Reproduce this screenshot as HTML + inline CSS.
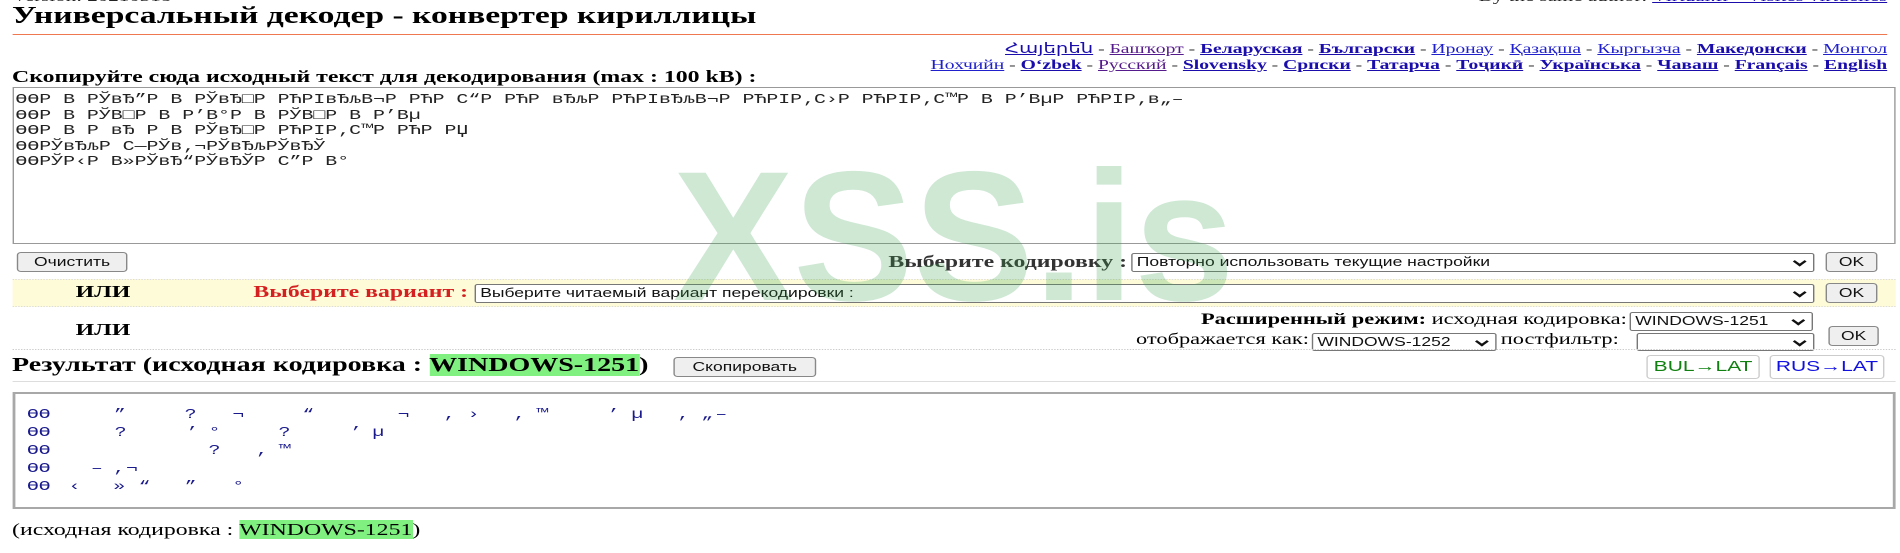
<!DOCTYPE html>
<html><head><meta charset="utf-8">
<style>
html,body{margin:0;padding:0;background:#fff;width:1900px;height:553px;overflow:hidden;}
#c{position:absolute;left:0;top:0;width:1357px;height:553px;transform:scaleX(1.4);transform-origin:0 0;font-family:"Liberation Serif",serif;color:#000;}
.a{position:absolute;white-space:nowrap;}
a{color:#1a0dab;}
a.v{color:#551a8b;font-weight:normal;}
a.b{font-weight:bold;}
a.n{font-weight:normal;color:#2020cc;}
.sel{position:absolute;box-sizing:border-box;border:1px solid #777;border-radius:2px;background:#fff;font:12.5px "Liberation Sans",sans-serif;line-height:17px;padding-left:3px;color:#111;overflow:hidden;white-space:nowrap;}
.sel:after{content:"";position:absolute;right:6px;top:4px;width:5px;height:5px;border-right:2px solid #111;border-bottom:2px solid #111;transform:rotate(45deg);}
.btn{position:absolute;box-sizing:border-box;border:1px solid #888;border-radius:3px;background:#efefef;font:12.5px "Liberation Sans",sans-serif;text-align:center;color:#111;}
.m{font-family:"Liberation Mono",monospace;}
.o{position:absolute;font:14px "Liberation Mono",monospace;color:#1a1a8c;}
.hl{background:#80f080;}
</style></head><body>
<div id="c">
<div class="a" style="left:8.6px;top:-11px;font-size:15px;color:#222">Version: 20210318</div>
<div class="a" style="right:9px;top:-11px;font-size:15px;color:#222">By the same author: <a href="#" style="color:#1a0dab">Virtual.fr - Visites virtuelles</a></div>
<div class="a" style="left:8.6px;top:3px;font-size:24px;font-weight:bold;line-height:27px">Универсальный декодер - конвертер кириллицы</div>
<div class="a" style="left:8.6px;top:34px;width:1339px;border-top:1.5px solid #f07850"></div>
<div class="a" style="right:9px;top:41px;font-size:14px;line-height:16px;text-align:right;color:#333">
<a class="b" href="#" style="font-family:'DejaVu Sans',sans-serif;font-weight:normal;color:#1a0dab">Հայերեն</a> - <a class="v" href="#">Башҡорт</a> - <a class="b" href="#">Беларуская</a> - <a class="b" href="#">Български</a> - <a class="n" href="#">Иронау</a> - <a class="n" href="#">Қазақша</a> - <a class="n" href="#">Кыргызча</a> - <a class="b" href="#">Македонски</a> - <a class="n" href="#">Монгол</a><br>
<a class="n" href="#">Нохчийн</a> - <a class="b" href="#">O‘zbek</a> - <a class="v" href="#">Русский</a> - <a class="b" href="#">Slovensky</a> - <a class="b" href="#">Српски</a> - <a class="b" href="#">Татарча</a> - <a class="b" href="#">Тоҷикӣ</a> - <a class="b" href="#">Українська</a> - <a class="b" href="#">Чаваш</a> - <a class="b" href="#">Français</a> - <a class="b" href="#">English</a></div>
<div class="a" style="left:8.6px;top:67px;font-size:17px;font-weight:bold">Скопируйте сюда исходный текст для декодирования (max : 100 kB) :</div>
<div class="a" style="left:8.6px;top:87px;width:1345px;height:157px;box-sizing:border-box;border:1px solid #999;"></div>
<pre class="m" style="position:absolute;left:11px;top:93px;margin:0;font-size:14.2px;line-height:15.5px;color:#222;white-space:pre">ӨӨР В РЎвЂ”Р В РЎвЂ□Р РЋРІвЂљВ¬Р РЋР С“Р РЋР вЂљР РЋРІвЂљВ¬Р РЋРІР‚С›Р РЋРІР‚С™Р В Р’ВµР РЋРІР‚в„–
ӨӨР В РЎВ□Р В Р’В°Р В РЎВ□Р В Р’Вµ
ӨӨР В Р вЂ Р В РЎвЂ□Р РЋРІР‚С™Р РЋР РЏ
ӨӨРЎвЂљР С—РЎв‚¬РЎвЂљРЎвЂЎ
ӨӨРЎР‹Р В»РЎвЂ“РЎвЂЎР С”Р В°</pre>
<div class="btn" style="left:12px;top:252px;width:79px;height:20px;line-height:18px">Очистить</div>
<div class="a" style="right:552px;top:252px;font-size:17px;font-weight:bold;color:#333">Выберите кодировку :</div>
<div class="sel" style="left:808px;top:253px;width:488px;height:19px">Повторно использовать текущие настройки</div>
<div class="btn" style="left:1304px;top:252px;width:37px;height:20px;line-height:18px">OK</div>
<div class="a" style="left:8.6px;top:279px;width:1345px;height:28px;background:#fdfbd8;border-top:1px dotted #ddd;border-bottom:1px dotted #ddd;box-sizing:border-box"></div>
<div class="a" style="left:54px;top:282px;font-size:17px;font-weight:bold">ИЛИ</div>
<div class="a" style="left:181px;top:282px;font-size:17px;font-weight:bold;color:#d42020">Выберите вариант :</div>
<div class="sel" style="left:339px;top:284px;width:957px;height:19px">Выберите читаемый вариант перекодировки :</div>
<div class="btn" style="left:1304px;top:283px;width:37px;height:20px;line-height:18px">OK</div>
<div class="a" style="left:54px;top:320px;font-size:17px;font-weight:bold">ИЛИ</div>
<div class="a" style="right:195px;top:311px;font-size:16px"><b>Расширенный режим:</b> исходная кодировка:</div>
<div class="sel" style="left:1164px;top:312px;width:131px;height:19px">WINDOWS-1251</div>
<div class="a" style="right:422px;top:331px;font-size:16px">отображается как:</div>
<div class="sel" style="left:937px;top:333px;width:132px;height:18px">WINDOWS-1252</div>
<div class="a" style="left:1072px;top:331px;font-size:16px">постфильтр:</div>
<div class="sel" style="left:1169px;top:333px;width:127px;height:18px"></div>
<div class="btn" style="left:1306px;top:326px;width:36px;height:20px;line-height:18px">OK</div>
<div class="a" style="left:8.6px;top:349px;width:1345px;border-top:1px dotted #ccc"></div>
<div class="a" style="left:8.6px;top:354px;font-size:20px;font-weight:bold">Результат (исходная кодировка : <span class="hl">WINDOWS-1251</span>)</div>
<div class="btn" style="left:481px;top:357px;width:102px;height:20px;line-height:18px">Скопировать</div>
<div class="btn" style="left:1176px;top:355px;width:81px;height:24px;line-height:22px;background:#fff;border-color:#ccc;color:#108010;font-family:'Liberation Sans Narrow','Liberation Sans',sans-serif;font-size:15px">BUL→LAT</div>
<div class="btn" style="left:1264px;top:355px;width:82px;height:24px;line-height:22px;background:#fff;border-color:#ccc;color:#1010e0;font-family:'Liberation Sans Narrow','Liberation Sans',sans-serif;font-size:15px">RUS→LAT</div>
<div class="a" style="left:8.6px;top:381px;width:1345px;border-top:1px solid #ddd"></div>
<div class="a" style="left:8.6px;top:392px;width:1345px;height:117px;box-sizing:border-box;border:2.5px solid #a8a8a8;border-left-width:2px"></div>
<div class="o" style="left:19.3px;top:407px">ӨӨ</div><div class="o" style="left:81.4px;top:407px">”</div><div class="o" style="left:132px;top:407px">?</div><div class="o" style="left:166px;top:407px">¬</div><div class="o" style="left:216px;top:407px">“</div><div class="o" style="left:284px;top:407px">¬</div><div class="o" style="left:317px;top:407px">,</div><div class="o" style="left:334px;top:407px">›</div><div class="o" style="left:367px;top:407px">,</div><div class="o" style="left:383px;top:407px">™</div><div class="o" style="left:434px;top:407px">’</div><div class="o" style="left:451px;top:407px">µ</div><div class="o" style="left:484px;top:407px">,</div><div class="o" style="left:501px;top:407px">„</div><div class="o" style="left:511px;top:407px">–</div>
<div class="o" style="left:19.3px;top:425px">ӨӨ</div><div class="o" style="left:82px;top:425px">?</div><div class="o" style="left:133px;top:425px">’</div><div class="o" style="left:149px;top:425px">°</div><div class="o" style="left:199px;top:425px">?</div><div class="o" style="left:250px;top:425px">’</div><div class="o" style="left:266px;top:425px">µ</div>
<div class="o" style="left:19.3px;top:443px">ӨӨ</div><div class="o" style="left:149px;top:443px">?</div><div class="o" style="left:183px;top:443px">,</div><div class="o" style="left:199px;top:443px">™</div>
<div class="o" style="left:19.3px;top:461px">ӨӨ</div><div class="o" style="left:65px;top:461px">–</div><div class="o" style="left:81px;top:461px">,</div><div class="o" style="left:90px;top:461px">¬</div>
<div class="o" style="left:19.3px;top:479px">ӨӨ</div><div class="o" style="left:49px;top:479px">‹</div><div class="o" style="left:81px;top:479px">»</div><div class="o" style="left:99px;top:479px">“</div><div class="o" style="left:132px;top:479px">”</div><div class="o" style="left:166px;top:479px">°</div>
<div class="a" style="left:8.6px;top:520px;font-size:17px">(исходная кодировка : <span class="hl">WINDOWS-1251</span>)</div>
</div>
<div style="position:absolute;left:673px;top:145px;font:bold 185px/185px 'Liberation Sans',sans-serif;color:rgba(60,165,85,0.25);transform:scaleX(0.975);transform-origin:0 0;white-space:nowrap;pointer-events:none">XSS.is</div>
</body></html>
